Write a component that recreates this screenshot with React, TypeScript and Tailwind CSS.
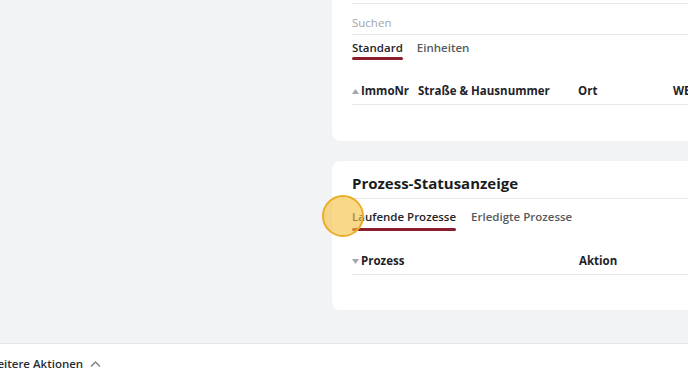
import React from "react";

const font = { fontFamily: '"Open Sans", "Noto Sans", sans-serif' };

function SortUp() {
  return (
    <svg width="7" height="5" viewBox="0 0 7 5" className="mr-[2px]">
      <path d="M0 5 L3.5 0 L7 5 Z" fill="#a3a7ad" />
    </svg>
  );
}
function SortDown() {
  return (
    <svg width="7" height="5" viewBox="0 0 7 5" className="mr-[2px]">
      <path d="M0 0 L3.5 5 L7 0 Z" fill="#a3a7ad" />
    </svg>
  );
}

export default function App() {
  return (
    <div className="relative w-[688px] h-[384px] overflow-hidden bg-[#f2f3f5]" style={font}>
      <div className="flex">
        <div className="w-[332px] shrink-0" />
        <div className="w-[420px] shrink-0 flex flex-col gap-[20px]">
          {/* Card 1 */}
          <div className="bg-white rounded-b-[8px] h-[141px] pl-[20px] shadow-[0_0_2px_rgba(0,0,0,0.04)]">
            <div className="h-[4px] border-b border-[#e7e8ea]" />
            <div className="pt-[10px] pb-[2px] border-b border-[#e7e8ea]">
              <div className="h-[18px] leading-[18px] text-[11.5px] text-[#a0a4aa]">Suchen</div>
            </div>
            <div className="flex gap-[14px] pt-[4px]">
              <div className="flex flex-col">
                <div className="h-[18px] leading-[18px] text-[11.5px] font-semibold text-[#1f2328]">Standard</div>
                <div className="mt-[0px] h-[3px] rounded-full bg-[#8a1c2e]" />
              </div>
              <div className="h-[18px] leading-[18px] text-[11.5px] font-semibold text-[#555a60]">Einheiten</div>
            </div>
            <div className="mt-[22px] pb-[4px] border-b border-[#e7e8ea] flex items-center h-[23px] text-[11.5px] font-bold text-[#1f2328]">
              <div className="flex items-center w-[66px]">
                <SortUp />
                <span>ImmoNr</span>
              </div>
              <div className="w-[160px]">Straße &amp; Hausnummer</div>
              <div className="w-[95px]">Ort</div>
              <div>WE</div>
            </div>
          </div>

          {/* Card 2 */}
          <div className="bg-white rounded-[8px] h-[149px] pl-[20px] shadow-[0_0_2px_rgba(0,0,0,0.04)]">
            <div className="pt-[10px] pb-[3px] border-b border-[#e7e8ea]">
              <div className="h-[24px] leading-[24px] text-[15px] font-bold text-[#1a1d21]">Prozess-Statusanzeige</div>
            </div>
            <div className="flex gap-[15px] pt-[9px]">
              <div className="flex flex-col">
                <div className="h-[18px] leading-[18px] text-[11.5px] font-semibold text-[#1f2328]">Laufende Prozesse</div>
                <div className="mt-[2px] h-[3px] rounded-full bg-[#8a1c2e]" />
              </div>
              <div className="h-[18px] leading-[18px] text-[11.5px] font-semibold text-[#555a60]">Erledigte Prozesse</div>
            </div>
            <div className="mt-[21px] pb-[4px] border-b border-[#e7e8ea] flex items-center h-[23px] text-[11.5px] font-bold text-[#1f2328]">
              <div className="flex items-center w-[227px]">
                <SortDown />
                <span>Prozess</span>
              </div>
              <div>Aktion</div>
            </div>
          </div>
        </div>
      </div>

      {/* Footer */}
      <div className="absolute left-0 right-0 top-[343px] bottom-0 bg-white border-t border-[#e3e5e8] flex items-start pt-[11px]">
        <div className="-ml-[12px] flex items-center h-[18px] text-[11.5px] font-semibold text-[#2a2e33]">
          <span className="leading-[18px]">weitere Aktionen</span>
          <svg width="11" height="8" viewBox="0 0 11 8" className="ml-[7px]">
            <path d="M1.5 6 L5.5 2 L9.5 6" fill="none" stroke="#7a7f86" strokeWidth="1.4" strokeLinecap="round" strokeLinejoin="round" />
          </svg>
        </div>
      </div>

      {/* Click indicator */}
      <div className="absolute left-[322px] top-[195px] w-[42px] h-[42px] rounded-full border-2 border-[#eaae2a] bg-[rgba(246,192,66,0.62)]" />
    </div>
  );
}
